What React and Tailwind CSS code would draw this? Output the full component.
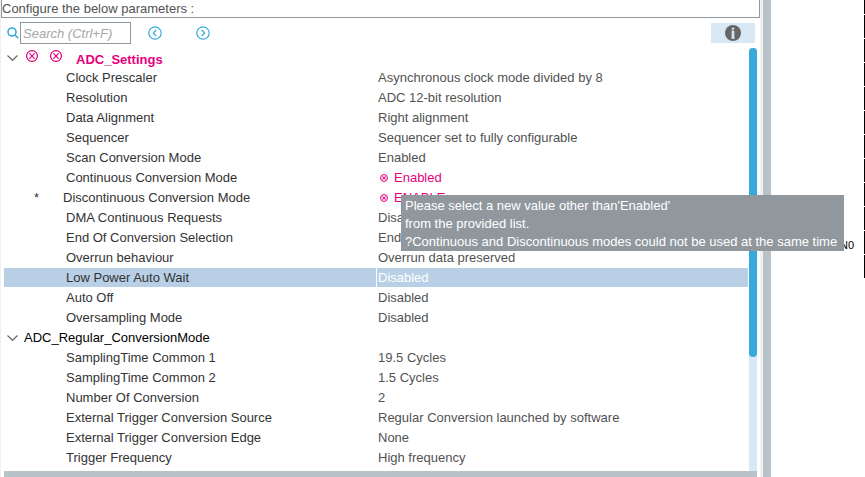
import React from 'react';

const groups = [
  {
    name: 'ADC_Settings',
    invalid: true,
    params: [
      { label: 'Clock Prescaler', value: 'Asynchronous clock mode divided by 8' },
      { label: 'Resolution', value: 'ADC 12-bit resolution' },
      { label: 'Data Alignment', value: 'Right alignment' },
      { label: 'Sequencer', value: 'Sequencer set to fully configurable' },
      { label: 'Scan Conversion Mode', value: 'Enabled' },
      { label: 'Continuous Conversion Mode', value: 'Enabled', invalid: true },
      {
        label: 'Discontinuous Conversion Mode',
        value: 'ENABLE',
        invalid: true,
        marked: true,
        hint: [
          "Please select a new value other than'Enabled'",
          'from the provided list.',
          '?Continuous and Discontinuous modes could not be used at the same time',
        ],
      },
      { label: 'DMA Continuous Requests', value: 'Disabled' },
      { label: 'End Of Conversion Selection', value: 'End' },
      { label: 'Overrun behaviour', value: 'Overrun data preserved' },
      { label: 'Low Power Auto Wait', value: 'Disabled', selected: true },
      { label: 'Auto Off', value: 'Disabled' },
      { label: 'Oversampling Mode', value: 'Disabled' },
    ],
  },
  {
    name: 'ADC_Regular_ConversionMode',
    params: [
      { label: 'SamplingTime Common 1', value: '19.5 Cycles' },
      { label: 'SamplingTime Common 2', value: '1.5 Cycles' },
      { label: 'Number Of Conversion', value: '2' },
      { label: 'External Trigger Conversion Source', value: 'Regular Conversion launched by software' },
      { label: 'External Trigger Conversion Edge', value: 'None' },
      { label: 'Trigger Frequency', value: 'High frequency' },
    ],
  },
];

const ErrorIcon = ({ className }) => (
  <svg className={className} viewBox="0 0 12 12" fill="none" stroke="currentColor" strokeWidth="1.2">
    <circle cx="6" cy="6" r="5.4" />
    <path d="M3.4 3.4l5.2 5.2M8.6 3.4l-5.2 5.2" />
  </svg>
);

const SmallErrorIcon = () => (
  <svg className="w-2 h-2 shrink-0" viewBox="0 0 8 8" fill="none" stroke="currentColor" strokeWidth="0.9">
    <circle cx="4" cy="4" r="3.5" fill="#fbd0e6" />
    <path d="M2.5 2.5l3 3M5.5 2.5l-3 3" />
  </svg>
);

const StepIcon = ({ d }) => (
  <svg className="w-3.5 h-3.5" viewBox="0 0 14 14" fill="none" stroke="currentColor" strokeWidth="1.2">
    <circle cx="7" cy="7" r="6.2" />
    <path d={d} />
  </svg>
);

const Toolbar = () => (
  <div className="flex items-center h-[30px] pl-1 pr-[5px]">
    <label htmlFor="search" className="w-[15px] flex justify-center text-[#39a9dc]" aria-label="Search">
      <svg className="w-3 h-3" viewBox="0 0 12 12" fill="none" stroke="currentColor" strokeWidth="1.6">
        <circle cx="5" cy="5" r="4" />
        <path d="M8 8l3.2 3.2" />
      </svg>
    </label>
    <input
      id="search"
      type="text"
      placeholder="Search (Ctrl+F)"
      className="w-[111px] h-[22px] px-0.5 border border-[#90989e] italic text-[#525a63] placeholder:text-[#a6a6a6] outline-none"
    />
    <button type="button" aria-label="Previous" className="ml-[17px] text-[#39a9dc]">
      <StepIcon d="M8.2 4L5.4 7L8.2 10" />
    </button>
    <button type="button" aria-label="Next" className="ml-[34px] text-[#39a9dc]">
      <StepIcon d="M5.8 4L8.6 7L5.8 10" />
    </button>
    <button
      type="button"
      aria-label="Information"
      className="ml-auto w-11 h-5 flex items-center justify-center bg-[#d9e8f5]"
    >
      <svg className="w-4 h-4" viewBox="0 0 16 16">
        <circle cx="8" cy="8" r="8" fill="#666666" />
        <circle cx="8" cy="3.6" r="1.2" fill="#d9e8f5" />
        <path d="M6.3 6H8.9V13H7.1V6.6M6.3 13.2H9.8" fill="none" stroke="#d9e8f5" strokeWidth="0.9" />
        <path d="M7.1 6H8.9V13H7.1Z" fill="#d9e8f5" />
      </svg>
    </button>
  </div>
);

const GroupRow = ({ group }) => (
  <tr className="h-5">
    <th colSpan={2} scope="rowgroup" className="p-0 text-left font-normal">
      <div className="flex items-center h-5 pl-[3px] leading-[19px]">
        <button type="button" aria-label={`Collapse ${group.name}`} className="w-[11px] text-[#6b6b6b]">
          <svg className="w-[11px] h-1.5" viewBox="0 0 11 6" fill="none" stroke="currentColor" strokeWidth="1.2">
            <path d="M0.5 0.5L5.5 5.3L10.5 0.5" />
          </svg>
        </button>
        {group.invalid ? (
          <>
            <ErrorIcon className="w-3 h-3 ml-2 mb-1 text-[#e6007e]" />
            <ErrorIcon className="w-3 h-3 ml-3 mb-1 text-[#e6007e]" />
            <span className="ml-3.5 pt-0.5 font-bold text-[#e6007e]">{group.name}</span>
          </>
        ) : (
          <span className="ml-1.5 pb-px text-black">{group.name}</span>
        )}
      </div>
    </th>
  </tr>
);

const ParamRow = ({ param }) => (
  <tr className={param.selected ? 'h-5 bg-[#b8cfe5]' : 'h-5'}>
    <th scope="row" className="w-1/2 p-0 border-b border-white text-left font-normal text-[#333333]">
      {param.marked ? (
        <div className="flex pl-[30px] leading-[19px]">
          <span className="w-[29px]">*</span>
          <span>{param.label}</span>
        </div>
      ) : (
        <div className="pl-[62px] leading-[19px]">{param.label}</div>
      )}
    </th>
    <td className="relative p-0 border-b border-l border-white">
      <div
        className={
          param.invalid
            ? 'flex items-center gap-1.5 pl-[3px] leading-[19px] text-[#e6007e]'
            : param.selected
              ? 'pl-px leading-[19px] text-white'
              : 'pl-px leading-[19px] text-[#525252]'
        }
      >
        {param.invalid && <SmallErrorIcon />}
        <span>{param.value}</span>
      </div>
      {param.hint && (
        <div
          role="tooltip"
          className="absolute z-10 left-6 top-[7px] pl-1 pr-[7px] pt-0.5 bg-[#90989e] text-white leading-[18px] whitespace-nowrap"
        >
          {param.hint.map((line) => (
            <div key={line}>{line}</div>
          ))}
        </div>
      )}
    </td>
  </tr>
);

const App = () => {
  return (
    <div className="flex min-h-screen bg-white text-[13px] font-['Liberation_Sans',Arial,sans-serif]">
      {/* Parameter panel */}
      <main className="grow min-w-0 flex flex-col border-l border-[#f0f0f0]">
        <h1 className="h-[18px] leading-[17px] border-x border-b border-[#90989e] text-[#525252]">
          Configure the below parameters :
        </h1>
        <Toolbar />
        <div className="grow flex pl-[3px] pr-[3px]">
          <div className="grow min-w-0 pb-[3px]">
            <table className="w-full table-fixed border-separate border-spacing-0">
              <colgroup>
                <col className="w-1/2" />
                <col className="w-1/2" />
              </colgroup>
              {groups.map((group) => (
                <tbody key={group.name}>
                  <GroupRow group={group} />
                  {group.params.map((param) => (
                    <ParamRow key={param.label} param={param} />
                  ))}
                </tbody>
              ))}
            </table>
          </div>
          {/* Vertical scrollbar */}
          <div className="w-2 shrink-0 ml-px bg-[#d9e8f5]">
            <div className="h-[73%] rounded-full bg-[#39a9dc]"></div>
          </div>
        </div>
        <div className="h-1.5 ml-[3px] mr-[3px] bg-[#b8c3c9]"></div>
      </main>

      {/* Splitter */}
      <div className="w-[11px] shrink-0 border-l-[3px] border-[#f0f0f0] bg-[#b8c3c9]"></div>

      {/* Pinout view */}
      <aside className="w-[94px] shrink-0 flex justify-end">
        <div className="pt-[238px] pr-2.5 text-[11px] leading-[14px] text-black">N0</div>
        <svg className="w-px h-[278px]" viewBox="0 0 1 278" preserveAspectRatio="none">
          <path d="M0.5 -9V278" stroke="#000000" strokeWidth="1" strokeDasharray="23 1" />
        </svg>
      </aside>
    </div>
  );
};

export default App;
